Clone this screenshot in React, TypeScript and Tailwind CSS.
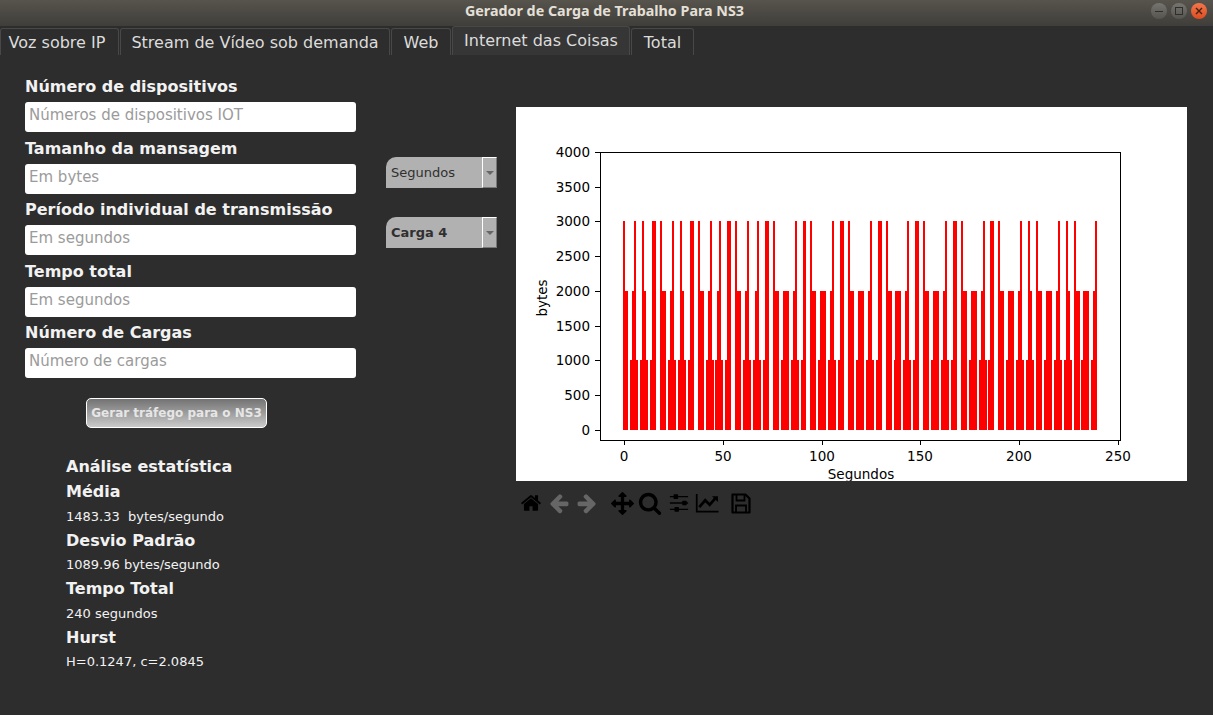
// bar runs read off the plot, [start, end] pairs, split at x=850 (3 units = 1px)
const LEFT_BASE = 590;
const RIGHT_BASE = 850;

const tallLeft = [99, 105, 132, 138, 156, 162, 186, 198, 210, 216, 246, 252, 270, 276, 300, 312, 324, 330, 360, 366, 387, 393, 411, 423, 435, 441, 471, 477, 501, 507, 525, 537, 549, 555, 615, 621, 639, 648, 660, 666, 726, 732, 750, 762, 774, 780];
const midLeft = [99, 114, 126, 138, 156, 168, 186, 198, 210, 228, 240, 252, 270, 282, 300, 312, 324, 342, 354, 366, 381, 393, 411, 423, 435, 453, 465, 477, 495, 507, 525, 537, 549, 567, 579, 597, 609, 621, 639, 648, 660, 678, 690, 708, 720, 732, 750, 762, 774, 780];
const lowLeft = [99, 114, 120, 144, 150, 174, 180, 198, 210, 228, 234, 258, 264, 288, 294, 312, 324, 342, 348, 372, 375, 399, 405, 423, 435, 453, 459, 483, 489, 513, 519, 537, 549, 567, 573, 597, 603, 627, 633, 648, 660, 678, 684, 708, 714, 738, 744, 762, 774, 780];

const tallRight = [60, 66, 84, 96, 108, 114, 171, 177, 195, 207, 219, 225, 285, 291, 309, 321, 333, 339, 399, 405, 420, 432, 444, 450, 510, 516, 534, 540, 558, 564, 624, 630, 648, 654, 672, 678, 735, 741];
const midRight = [0, 12, 24, 42, 54, 66, 84, 96, 108, 126, 135, 153, 165, 177, 195, 207, 219, 237, 249, 267, 279, 291, 309, 321, 333, 351, 363, 381, 393, 405, 420, 432, 444, 462, 474, 492, 504, 516, 534, 546, 558, 576, 588, 606, 618, 630, 648, 660, 672, 690, 699, 717, 729, 741];
const lowRight = [0, 12, 18, 42, 48, 72, 78, 96, 108, 126, 132, 153, 159, 183, 189, 207, 219, 237, 243, 267, 273, 297, 303, 321, 333, 351, 357, 381, 387, 411, 414, 432, 444, 462, 468, 492, 498, 522, 528, 552, 558, 576, 582, 606, 612, 636, 642, 666, 672, 690, 693, 717, 723, 741];

function toRuns(base: number, values: number[]) {
  const runs: { x: number; w: number }[] = [];
  for (let i = 0; i < values.length; i += 2) {
    runs.push({ x: base + values[i] / 3 - 516, w: (values[i + 1] - values[i]) / 3 });
  }
  return runs;
}

const levels = [
  { top: 114, runs: [...toRuns(LEFT_BASE, tallLeft), ...toRuns(RIGHT_BASE, tallRight)] },
  { top: 184, runs: [...toRuns(LEFT_BASE, midLeft), ...toRuns(RIGHT_BASE, midRight)] },
  { top: 253, runs: [...toRuns(LEFT_BASE, lowLeft), ...toRuns(RIGHT_BASE, lowRight)] },
];

const yTicks = [
  { label: '4000', y: 45 },
  { label: '3500', y: 80 },
  { label: '3000', y: 114 },
  { label: '2500', y: 149 },
  { label: '2000', y: 184 },
  { label: '1500', y: 219 },
  { label: '1000', y: 253 },
  { label: '500', y: 288 },
  { label: '0', y: 323 },
];

const xTicks = [
  { label: '0', x: 108 },
  { label: '50', x: 207 },
  { label: '100', x: 306 },
  { label: '150', x: 404 },
  { label: '200', x: 503 },
  { label: '250', x: 602 },
];

function Chart() {
  return (
    <svg width={671} height={374} viewBox="0 0 671 374" className="block bg-white">
      {levels.map((level) =>
        level.runs.map((r) => (
          <rect key={`${level.top}-${r.x}`} x={r.x} y={level.top} width={r.w} height={323 - level.top} fill="#ff0000" shapeRendering="crispEdges" />
        )),
      )}
      <rect x={84} y={45} width={520} height={288} fill="none" stroke="#000" strokeWidth={1} shapeRendering="crispEdges" />
      {yTicks.map((t) => (
        <g key={t.label}>
          <rect x={79} y={t.y} width={5} height={1} fill="#000" />
          <text x={74} y={t.y + 5} textAnchor="end" fontSize={13.5} fill="#000">{t.label}</text>
        </g>
      ))}
      {xTicks.map((t) => (
        <g key={t.label}>
          <rect x={t.x} y={333} width={1} height={5} fill="#000" />
          <text x={t.x} y={354} textAnchor="middle" fontSize={13.5} fill="#000">{t.label}</text>
        </g>
      ))}
      <text x={345} y={372} textAnchor="middle" fontSize={13.5} fill="#000">Segundos</text>
      <text x={31} y={191} textAnchor="middle" fontSize={13.5} fill="#000" transform="rotate(-90 31 191)">bytes</text>
    </svg>
  );
}

// matplotlib's toolbar uses Font Awesome 4 glyphs
function Glyph({ size, d, className }: { size: number; d: string; className?: string }) {
  return (
    <svg width={size} height={size} viewBox="0 0 1792 1792" fill="currentColor" className={className}>
      <path d={d} />
    </svg>
  );
}

const HOME = 'M1472 992v480q0 26-19 45t-45 19h-384v-384h-256v384h-384q-26 0-45-19t-19-45v-480q0-1 .5-3t.5-3l575-474 575 474q1 2 1 6zm223-69l-62 74q-8 9-21 11h-3q-13 0-21-6l-692-577-692 577q-12 8-24 6-13-2-21-11l-62-74q-8-10-7-23.500t11-21.500l719-599q32-26 76-26t76 26l244 204v-195q0-14 9-23t23-9h192q14 0 23 9t9 23v408l219 182q10 8 11 21.500t-7 23.500z';
const ARROW_LEFT = 'M1664 896v128q0 53-32.500 90.500t-84.500 37.500h-704l293 294q38 36 38 90t-38 90l-75 76q-37 37-90 37-52 0-91-37l-651-652q-37-37-37-90 0-52 37-91l651-650q38-38 91-38 52 0 90 38l75 74q38 38 38 91t-38 91l-293 293h704q52 0 84.500 37.500t32.500 90.500z';
const ARROW_RIGHT = 'M1600 960q0 54-37 91l-651 651q-39 37-91 37-51 0-90-37l-75-75q-38-38-38-91t38-91l293-293h-704q-52 0-84.500-37.500t-32.500-90.500v-128q0-53 32.500-90.500t84.500-37.500h704l-293-294q-38-36-38-90t38-90l75-75q38-38 90-38 53 0 91 38l651 651q37 35 37 90z';
const MOVE = 'M1792 896q0 26-19 45l-256 256q-19 19-45 19t-45-19-19-45v-128h-384v384h128q26 0 45 19t19 45-19 45l-256 256q-19 19-45 19t-45-19l-256-256q-19-19-19-45t19-45 45-19h128v-384h-384v128q0 26-19 45t-45 19-45-19l-256-256q-19-19-19-45t19-45l256-256q19-19 45-19t45 19 19 45v128h384v-384h-128q-26 0-45-19t-19-45 19-45l256-256q19-19 45-19t45 19l256 256q19 19 19 45t-19 45-45 19h-128v384h384v-128q0-26 19-45t45-19 45 19l256 256q19 19 19 45z';
const SEARCH = 'M1216 832q0-185-131.500-316.500t-316.500-131.500-316.500 131.500-131.500 316.500 131.500 316.500 316.500 131.500 316.500-131.500 131.500-316.500zm512 832q0 52-38 90t-90 38q-54 0-90-38l-343-342q-179 124-399 124-143 0-273.500-55.500t-225-150-150-225-55.500-273.500 55.500-273.500 150-225 225-150 273.500-55.500 273.500 55.500 225 150 150 225 55.500 273.500q0 220-124 399l343 343q37 37 37 90z';

function SlidersIcon() {
  return (
    <svg width={20} height={22} viewBox="0 0 22 24">
      <path d="M1 5h20M1 12h20M1 19h20" stroke="#000" strokeWidth={1.6} />
      <rect x={5} y={2.5} width={5} height={5} rx={0.8} fill="#000" />
      <rect x={14.5} y={9.5} width={5} height={5} rx={0.8} fill="#000" />
      <rect x={6} y={16.5} width={5} height={5} rx={0.8} fill="#000" />
    </svg>
  );
}

function LineChartIcon() {
  return (
    <svg width={24} height={20} viewBox="0 0 26 22">
      <path d="M1.7 1v19.500h24" fill="none" stroke="#000" strokeWidth={1.9} />
      <path d="M4.5 15.500l6.500-7.500 5 5 6-7" fill="none" stroke="#000" strokeWidth={3} />
      <path d="M18.500 3.500h6.500v6.500z" fill="#000" />
    </svg>
  );
}

function SaveIcon() {
  return (
    <svg width={20} height={21} viewBox="0 0 20 21">
      <path d="M1.500 1.500h13l4 4v14h-17z" fill="none" stroke="#000" strokeWidth={2.2} strokeLinejoin="round" />
      <path d="M5.500 1.500v6h8v-6M5 19.500v-7h10v7" fill="none" stroke="#000" strokeWidth={1.8} />
    </svg>
  );
}

const tabs = [
  { label: 'Voz sobre IP', width: 'w-[119px]', padding: 'pr-[5px] pt-[2px]' },
  { label: 'Stream de Vídeo sob demanda', width: 'w-[270px]', padding: 'pt-[2px]' },
  { label: 'Web', width: 'w-[60px]', padding: 'pt-[2px]' },
  { label: 'Internet das Coisas', width: 'w-[178px]', padding: '', active: true },
  { label: 'Total', width: 'w-[63px]', padding: 'pt-[2px]' },
];

const fields = [
  { label: 'Número de dispositivos', placeholder: 'Números de dispositivos IOT', height: 'h-[31px]' },
  { label: 'Tamanho da mansagem', placeholder: 'Em bytes', height: 'h-[32px]' },
  { label: 'Período individual de transmissão', placeholder: 'Em segundos', height: 'h-[31px]' },
  { label: 'Tempo total', placeholder: 'Em segundos', height: 'h-[32px]' },
  { label: 'Número de Cargas', placeholder: 'Número de cargas', height: 'h-[31px]' },
];

const stats = [
  { title: 'Média', value: '1483.33  bytes/segundo', titleHeight: 'h-[25px] pb-[1px]', valueHeight: 'h-[24px]' },
  { title: 'Desvio Padrão', value: '1089.96 bytes/segundo', titleHeight: 'h-[24px]', valueHeight: 'h-[24px]' },
  { title: 'Tempo Total', value: '240 segundos', titleHeight: 'h-[25px] pb-[1px]', valueHeight: 'h-[24px]' },
  { title: 'Hurst', value: 'H=0.1247, c=2.0845', titleHeight: 'h-[24px]', valueHeight: 'h-[24px]' },
];

function Combo({ label, bold }: { label: string; bold?: boolean }) {
  return (
    <div className="flex h-[31px] w-[111px] items-stretch rounded-tl-[10px] bg-[#b1b1b1] text-[13px] text-[#303030]">
      <span className={`flex-1 self-center pl-[5px] ${bold ? 'font-bold' : ''}`}>{label}</span>
      <span className="flex w-[15px] items-center justify-center border-t border-l border-t-white border-l-white border-b border-r border-b-[#777] border-r-[#777]">
        <span className="h-0 w-0 border-x-[4px] border-t-[4px] border-x-transparent border-t-[#666]" />
      </span>
    </div>
  );
}

function WinButton({ color, children }: { color: string; children: React.ReactNode }) {
  return (
    <div className={`flex h-[16px] w-[16px] items-center justify-center rounded-full ${color}`}>
      {children}
    </div>
  );
}

export default function App() {
  return (
    <div className="flex h-screen w-screen flex-col overflow-hidden bg-[#2d2d2d] font-['DejaVu_Sans',sans-serif] text-white">
      <div className="relative flex h-[26px] shrink-0 items-center justify-center bg-gradient-to-b from-[#57544d] to-[#403e3a] pb-[4px] pr-[4px]">
        <span className="font-['Noto_Sans',sans-serif] text-[14.3px] font-bold text-[#e4e0d8]">Gerador de Carga de Trabalho Para NS3</span>
        <div className="absolute right-[6px] top-[3px] flex gap-[4px]">
          <WinButton color="bg-gradient-to-b from-[#77756f] to-[#56544f]">
            <span className="h-[1px] w-[8px] bg-[#2f2e2b]" />
          </WinButton>
          <WinButton color="bg-gradient-to-b from-[#77756f] to-[#56544f]">
            <span className="h-[8px] w-[8px] border border-[#2f2e2b]" />
          </WinButton>
          <WinButton color="bg-gradient-to-b from-[#f2764a] to-[#dd4c1f]">
            <svg width="8" height="8" viewBox="0 0 8 8">
              <path d="M1 1 L7 7 M7 1 L1 7" stroke="#41210f" strokeWidth="1.4" />
            </svg>
          </WinButton>
        </div>
      </div>

      <div className="flex h-[29px] shrink-0 items-end gap-[1px] text-[16px] text-[#dcdcdc]">
        {tabs.map((tab) => (
          <div
            key={tab.label}
            className={`flex items-center justify-center rounded-t-[3px] border border-b-0 border-[#484848] ${tab.width} ${tab.padding} ${tab.active ? 'h-[29px] bg-[#363636]' : 'h-[27px] bg-[#2d2d2d]'}`}
          >
            {tab.label}
          </div>
        ))}
      </div>

      <div className="flex flex-1">
        <div className="w-[356px] shrink-0 pl-[25px] pt-[16px]">
          {fields.map((f) => (
            <div key={f.label}>
              <div className={`flex items-center pt-[1px] text-[16px] font-bold leading-none text-[#f2f2f2] ${f.height}`}>{f.label}</div>
              <div className="flex h-[30px] items-center rounded-[3px] bg-white pb-[4px] pl-[4px] text-[15px] text-[#9b9b9b]">{f.placeholder}</div>
            </div>
          ))}

          <div className="mt-[20px] ml-[61px] flex h-[30px] w-[181px] items-center justify-center rounded-[5px] border border-white bg-gradient-to-b from-[#737373] to-[#cacaca] text-[12px] font-bold text-[#e6e6e6]">
            Gerar tráfego para o NS3
          </div>

          <div className="mt-[27px] pl-[41px] text-[#f2f2f2]">
            <div className="flex h-[25px] items-center pb-[1px] text-[16px] font-bold">Análise estatística</div>
            {stats.map((s) => (
              <div key={s.title}>
                <div className={`flex items-center text-[16px] font-bold ${s.titleHeight}`}>{s.title}</div>
                <div className={`flex items-center whitespace-pre text-[13px] ${s.valueHeight}`}>{s.value}</div>
              </div>
            ))}
          </div>
        </div>

        <div className="ml-[30px] flex w-[111px] shrink-0 flex-col gap-[29px] pt-[102px]">
          <Combo label="Segundos" />
          <Combo label="Carga 4" bold />
        </div>

        <div className="ml-[19px] w-[671px] shrink-0 pt-[52px]">
          <Chart />
          <div className="mt-[11px] flex h-[22px] items-center pl-[1px] text-black">
            <span className="flex w-[28px] justify-center"><Glyph size={22} d={HOME} /></span>
            <span className="flex w-[28px] justify-center text-[#666]"><Glyph size={22} d={ARROW_LEFT} /></span>
            <span className="flex w-[28px] justify-center text-[#666]"><Glyph size={22} d={ARROW_RIGHT} /></span>
            <span className="ml-[7px] flex w-[28px] justify-center"><Glyph size={23} d={MOVE} /></span>
            <span className="flex w-[28px] justify-center"><Glyph size={24} d={SEARCH} /></span>
            <span className="flex w-[29px] justify-center"><SlidersIcon /></span>
            <span className="flex w-[28px] justify-center"><LineChartIcon /></span>
            <span className="ml-[6px] flex w-[28px] justify-center"><SaveIcon /></span>
          </div>
        </div>
      </div>
    </div>
  );
}
